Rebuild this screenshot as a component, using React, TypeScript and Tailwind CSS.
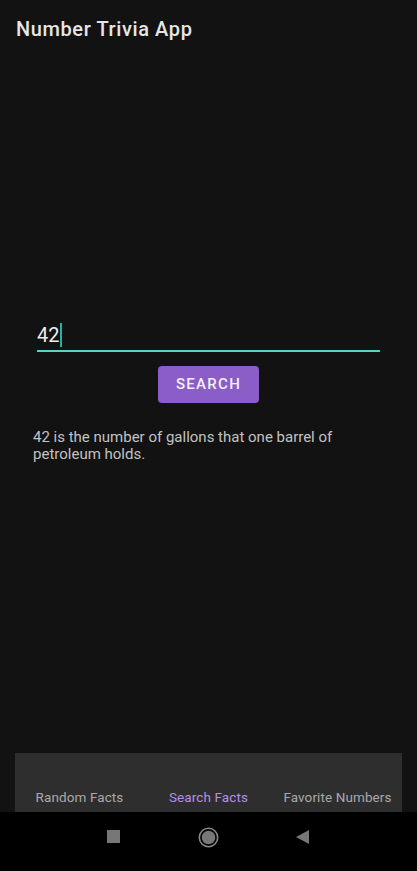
import { useState } from "react";

const tabs = ["Random Facts", "Search Facts", "Favorite Numbers"];

const App = () => {
  const [query] = useState("42");
  const [active] = useState(1);

  return (
    <div
      className="w-[417px] h-[871px] flex flex-col bg-[#121212] overflow-hidden"
      style={{ fontFamily: "Roboto, 'Noto Sans', sans-serif" }}
    >
      {/* app bar */}
      <div className="h-14 shrink-0 px-4 pt-[15px]">
        <div className="text-[20px] leading-[28px] font-medium tracking-[0.6px] text-[#e6e6e6]">
          Number Trivia App
        </div>
      </div>

      {/* search content */}
      <div className="flex-1 flex flex-col pt-[267px]">
        <div className="mx-[37px] flex items-start pb-[3px] border-b-2 border-[#55d3c8]">
          <span className="text-[20px] leading-[24px] text-[#ececec]">{query}</span>
          <span className="w-[2px] h-[24px] bg-[#1bb5ad] ml-px" />
        </div>

        <div className="flex justify-center mt-[14px]">
          <button className="w-[101px] h-[37px] rounded-[4px] bg-[#8a5dc8] text-[15px] font-medium tracking-[1.3px] text-[#f2f2f2]">
            SEARCH
          </button>
        </div>

        <p className="mt-[26px] pl-[33px] pr-[40px] text-[15px] leading-[17px] text-[#c2c2c2]">
          42 is the number of gallons that one barrel of petroleum holds.
        </p>
      </div>

      {/* bottom navigation */}
      <div className="mx-[15px] h-[59px] shrink-0 bg-[#2e2e2e] grid grid-cols-3 pt-[34px]">
        {tabs.map((tab, i) => (
          <div
            key={tab}
            className={`text-center text-[13.5px] leading-[20px] tracking-[0.1px] ${
              i == active ? "text-[#b58ee8]" : "text-[#a9a9a9]"
            }`}
          >
            {tab}
          </div>
        ))}
      </div>

      {/* system navigation bar */}
      <div className="h-[59px] shrink-0 bg-black relative">
        <div className="absolute left-[107px] top-[18px] w-[13px] h-[13px] bg-[#777777]" />
        <svg
          className="absolute left-[198px] top-[15px]"
          width="21"
          height="21"
          viewBox="0 0 21 21"
        >
          <circle cx="10.5" cy="10.5" r="9.2" fill="none" stroke="#888888" strokeWidth="1.6" />
          <circle cx="10.5" cy="10.5" r="6.8" fill="#777777" />
        </svg>
        <svg
          className="absolute left-[296px] top-[18px]"
          width="13"
          height="14"
          viewBox="0 0 13 14"
        >
          <path d="M0 7 L13 0 L13 14 Z" fill="#777777" />
        </svg>
      </div>
    </div>
  );
};

export default App;
